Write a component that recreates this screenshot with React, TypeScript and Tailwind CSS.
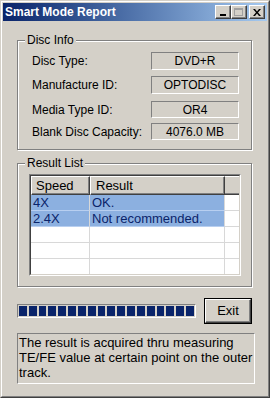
const discInfo = [
  { label: 'Disc Type:', value: 'DVD+R', mt: 'mt-[11px]', h: 'h-[18px]' },
  { label: 'Manufacture ID:', value: 'OPTODISC', mt: 'mt-[6px]', h: 'h-[18px]' },
  { label: 'Media Type ID:', value: 'OR4', mt: 'mt-[7px]', h: 'h-[17px]' },
  { label: 'Blank Disc Capacity:', value: '4076.0 MB', mt: 'mt-[5px]', h: 'h-[17px]' },
];

const results = [
  { speed: '4X', result: 'OK.', selected: true },
  { speed: '2.4X', result: 'Not recommended.', selected: true },
  { speed: '', result: '', selected: false },
  { speed: '', result: '', selected: false },
  { speed: '', result: '', selected: false },
];

function GroupBox({ title, className, children }: { title: string; className?: string; children: React.ReactNode }) {
  return (
    <div className={`relative border border-[#808080] shadow-[inset_1px_1px_0_#fff,1px_1px_0_#fff] ${className ?? ''}`}>
      <span className="absolute -top-[8px] left-[7px] px-[2px] bg-[#d4d0c8] leading-[14px]">{title}</span>
      {children}
    </div>
  );
}

function TitleButton({ children }: { children: React.ReactNode }) {
  return (
    <div className="w-[16px] h-[14px] bg-[#d4d0c8] border border-t-white border-l-white border-r-[#404040] border-b-[#404040] shadow-[inset_-1px_-1px_0_#808080] flex items-center justify-center">
      {children}
    </div>
  );
}

export default function App() {
  return (
    <div
      className="w-[270px] h-[398px] bg-[#d4d0c8] border border-t-[#d4d0c8] border-l-[#d4d0c8] border-r-[#404040] border-b-[#404040] text-[12px] text-black"
      style={{ fontFamily: '"Liberation Sans", Arial, sans-serif' }}
    >
      <div className="h-full border border-t-white border-l-white border-r-[#808080] border-b-[#808080] p-[1px] flex flex-col">
        {/* Title bar */}
        <div className="h-[18px] flex items-center justify-between pl-[2px] pr-[2px] bg-linear-to-r from-[#0a246a] to-[#a6caf0]">
          <span className="text-white font-bold text-[12px] leading-none">Smart Mode Report</span>
          <div className="flex items-center">
            <TitleButton>
              <div className="w-[6px] h-[2px] bg-black mt-[6px] -ml-[1px]" />
            </TitleButton>
            <TitleButton>
              <div className="w-[9px] h-[8px] border border-[#a0a0a0] border-t-2 -ml-[1px]" />
            </TitleButton>
            <div className="ml-[2px]">
              <TitleButton>
                <svg width="8" height="7" viewBox="0 0 8 7" className="-ml-[1px]">
                  <path d="M0 0h2l2 2.5L6 0h2L5 3.5 8 7H6L4 4.5 2 7H0l3-3.5z" fill="#000" />
                </svg>
              </TitleButton>
            </div>
          </div>
        </div>

        {/* Body */}
        <div className="flex-1 flex flex-col pl-[14px] pr-[15px]">
          <GroupBox title="Disc Info" className="mt-[19px] h-[110px] pl-[14px] pr-[12px]">
            {discInfo.map(row => (
              <div key={row.label} className={`flex items-center justify-between ${row.mt}`}>
                <span className="leading-none">{row.label}</span>
                <div
                  className={`w-[88px] ${row.h} flex items-center justify-center border border-t-[#808080] border-l-[#808080] border-r-white border-b-white leading-none`}
                >
                  {row.value}
                </div>
              </div>
            ))}
          </GroupBox>

          <GroupBox title="Result List" className="mt-[13px] h-[124px] pl-[11px] pr-[11px] pt-[10px]">
            <div className="w-[212px] h-[102px] border border-t-[#808080] border-l-[#808080] border-r-white border-b-white text-[13px]">
              <div className="h-full border border-t-[#404040] border-l-[#404040] border-r-[#d4d0c8] border-b-[#d4d0c8] bg-white overflow-hidden">
                <div className="flex h-[19px] bg-[#d4d0c8]">
                  <div className="w-[59px] h-full border border-t-white border-l-white border-r-[#404040] border-b-[#404040] shadow-[inset_-1px_-1px_0_#808080] pl-[4px] flex items-center">
                    Speed
                  </div>
                  <div className="w-[135px] h-full border border-t-white border-l-white border-r-[#404040] border-b-[#404040] shadow-[inset_-1px_-1px_0_#808080] pl-[5px] flex items-center">
                    Result
                  </div>
                  <div className="flex-1 h-full border-t border-t-white border-b border-b-[#404040] shadow-[inset_0_-1px_0_#808080]" />
                </div>
                {results.map((r, i) => (
                  <div key={i} className="flex h-[16px]">
                    <div
                      className={`w-[59px] h-full border-b border-r border-[#d8d8d8] pl-[2px] leading-[15px] ${r.selected ? 'bg-[#8cb0e0] text-[#0a246a] border-b-[#b8cff0]' : ''}`}
                    >
                      {r.speed}
                    </div>
                    <div
                      className={`w-[135px] h-full border-b border-r border-[#d8d8d8] pl-[2px] leading-[15px] ${r.selected ? 'bg-[#8cb0e0] text-[#0a246a] border-b-[#b8cff0]' : ''}`}
                    >
                      {r.result}
                    </div>
                    <div className="flex-1 h-full border-b border-[#d8d8d8]" />
                  </div>
                ))}
              </div>
            </div>
          </GroupBox>

          {/* Progress + Exit */}
          <div className="flex items-center justify-between mt-[11px]">
            <div className="w-[179px] h-[14px] border border-t-[#808080] border-l-[#808080] border-r-white border-b-white p-[1px] flex gap-[2px]">
              {Array.from({ length: 18 }).map((_, i) => (
                <div key={i} className="w-[8px] h-full bg-[#0a246a]" />
              ))}
            </div>
            <div className="w-[48px] h-[26px] border border-black">
              <div className="h-full border border-t-white border-l-white border-r-[#404040] border-b-[#404040] shadow-[inset_-1px_-1px_0_#808080] flex items-center justify-center text-[13px]">
                Exit
              </div>
            </div>
          </div>

          {/* Info text */}
          <div className="mt-[9px] w-[238px] h-[51px] border border-t-[#808080] border-l-[#808080] border-r-white border-b-white pl-[1px] pt-[1px] leading-[15px] text-[13px]">
            The result is acquired thru measuring TE/FE value at certain point on the outer track.
          </div>
        </div>
      </div>
    </div>
  );
}
